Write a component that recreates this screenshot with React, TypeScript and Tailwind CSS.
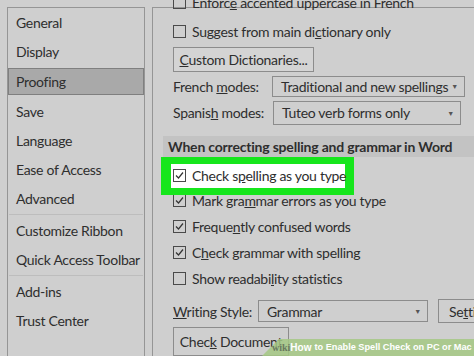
import React from 'react';

const font = { fontFamily: 'Lato, "Open Sans", sans-serif' };

const Check = ({ checked }: { checked?: boolean }) => (
    <span className="w-[13px] h-[13px] border border-[#4a4a4a] flex items-center justify-center shrink-0">
        {checked && (
            <svg width="11" height="11" viewBox="0 0 11 11">
                <path d="M2 5.5 L4.5 8 L9 2.5" fill="none" stroke="#333" strokeWidth="1.2" />
            </svg>
        )}
    </span>
);

const Select = ({ value, className }: { value: string; className: string }) => (
    <div className={`shrink-0 border border-[#8c8c8c] flex items-center justify-between pl-[8px] pr-[6px] ${className}`}>
        <span>{value}</span>
        <span className="text-[7px] text-[#555]">▼</span>
    </div>
);

const navItems = [
    'General', 'Display', 'Proofing', 'Save', 'Language', 'Ease of Access', 'Advanced',
];

export default function App() {
    return (
        <div style={font} className="w-[474px] h-[356px] overflow-hidden relative bg-[#cfcfcf] text-[#2e2e2e] text-[14px] tracking-[-0.3px] whitespace-nowrap flex pt-[7px] pl-[7px]">
            {/* sidebar */}
            <div className="w-[138px] shrink-0 border-l border-t border-r border-[#959595] flex flex-col">
                {navItems.map((item) => (
                    <div
                        key={item}
                        className={
                            item === 'Proofing'
                                ? 'h-[27px] mt-[2px] mb-[2px] bg-[#a9a9a9] border border-[#7f7f7f] flex items-center pl-[7px]'
                                : 'h-[29px] flex items-center pl-[8px]'
                        }
                    >
                        {item}
                    </div>
                ))}
                <div className="h-px bg-[#bdbdbd] mx-[1px] my-[1px]" />
                <div className="h-[29px] flex items-center pl-[8px]">Customize Ribbon</div>
                <div className="h-[29px] flex items-center pl-[8px]">Quick Access Toolbar</div>
                <div className="h-px bg-[#bdbdbd] mx-[1px] my-[1px]" />
                <div className="h-[29px] flex items-center pl-[8px]">Add-ins</div>
                <div className="h-[29px] flex items-center pl-[8px]">Trust Center</div>
            </div>

            {/* options panel */}
            <div className="ml-[7px] flex-1 border-l border-t border-[#959595] pl-[20px] pt-px flex flex-col min-w-0">
                <div className="mt-[-21px] h-[30px] flex items-center gap-[6px]">
                    <Check />
                    <span>Enforc<u>e</u> accented uppercase in French</span>
                </div>
                <div className="h-[30px] flex items-center gap-[6px]">
                    <Check />
                    <span>Suggest from main di<u>c</u>tionary only</span>
                </div>
                <div className="mt-px h-[26px] w-[141px] border border-[#8c8c8c] bg-[#d4d4d4] flex items-center justify-center">
                    <span><u>C</u>ustom Dictionaries...</span>
                </div>
                <div className="mt-[4px] h-[21px] flex items-center">
                    <span className="w-[99px] shrink-0">French <u>m</u>odes:</span>
                    <Select value="Traditional and new spellings" className="w-[193px] h-[21px]" />
                </div>
                <div className="mt-[4px] h-[24px] flex items-center">
                    <span className="w-[100px] shrink-0">Spanis<u>h</u> modes:</span>
                    <Select value="Tuteo verb forms only" className="w-[188px] h-[24px]" />
                </div>
                <div className="mt-[11px] ml-[-10px] h-[22px] bg-[#c3c3c3] flex items-center pl-[5px] font-bold tracking-[-0.2px]">
                    When correcting spelling and grammar in Word
                </div>

                <div className="mt-[6px] flex flex-col">
                    <div className="relative h-[25px] flex items-center gap-[6px]">
                        <div className="absolute left-[-12px] top-[-6px] w-[193px] h-[38px] bg-[#16e61c] p-[7px] pl-[10px] pr-[9px]">
                            <div className="w-full h-full bg-white" />
                        </div>
                        <span className="relative"><Check checked /></span>
                        <span className="relative">Check s<u>p</u>elling as you type</span>
                    </div>
                    {[
                        <>Mark gra<u>m</u>mar errors as you type</>,
                        <>Freque<u>n</u>tly confused words</>,
                        <>C<u>h</u>eck grammar with spelling</>,
                    ].map((label, i) => (
                        <div key={i} className={`${i === 0 ? 'h-[25px]' : 'h-[26px]'} flex items-center gap-[6px]`}>
                            <Check checked />
                            <span>{label}</span>
                        </div>
                    ))}
                    <div className="h-[26px] flex items-center gap-[6px]">
                        <Check />
                        <span>Show readabi<u>l</u>ity statistics</span>
                    </div>
                </div>

                <div className="mt-[9px] h-[22px] flex items-center">
                    <span className="w-[85px] shrink-0"><u>W</u>riting Style:</span>
                    <Select value="Grammar" className="w-[170px] h-[22px]" />
                    <div className="shrink-0 ml-[10px] h-[24px] pl-[10px] pr-[12px] border border-[#8c8c8c] flex items-center">
                        <span>Se<u>t</u>tings...</span>
                    </div>
                </div>
                <div className="mt-[5px] h-[30px] w-[116px] border border-[#8c8c8c] flex items-center justify-center">
                    <span>Chec<u>k</u> Document</span>
                </div>
            </div>

            {/* watermark */}
            <div className="absolute left-[262px] right-0 bottom-0 h-[17px] bg-[#a4c884]/85 [clip-path:polygon(17px_0,100%_0,100%_100%,0_100%)] flex items-center pl-[10px] tracking-normal" style={{ fontFamily: '"Liberation Sans", Arial, sans-serif' }}>
                <span className="text-[10px] font-bold text-[#6a7a5e]" style={{ fontFamily: '"Liberation Serif", serif' }}>wiki</span>
                <span className="text-[10px] font-bold text-white">How</span>
                <span className="text-[9.2px] font-bold text-white ml-[3px]">to Enable Spell Check on PC or Mac</span>
            </div>
        </div>
    );
}
